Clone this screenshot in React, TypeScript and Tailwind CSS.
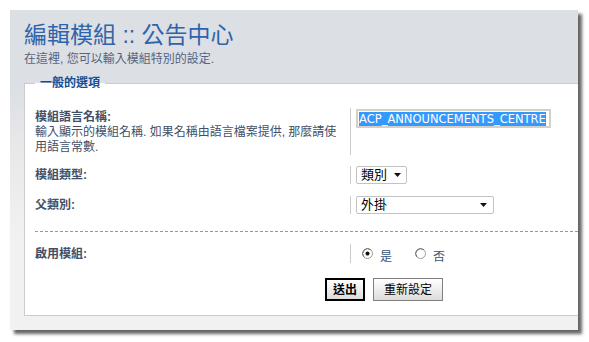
import React from "react";

function Radio({ checked }: { checked?: boolean }) {
  return (
    <svg width="11" height="11" viewBox="0 0 11 11" className="shrink-0">
      <circle cx="5.5" cy="5.5" r="5" fill="#fff" stroke="#9a9a9a" strokeWidth="1" />
      <path d="M1.8 8.8 A5 5 0 0 1 8.8 1.8" fill="none" stroke="#6f6f6f" strokeWidth="1" />
      {checked && <circle cx="5.5" cy="5.5" r="2" fill="#111" />}
    </svg>
  );
}

function Arrow() {
  return (
    <svg width="7" height="4" viewBox="0 0 7 4">
      <path d="M0 0 H7 L3.5 4 Z" fill="#111" />
    </svg>
  );
}

export default function App() {
  return (
    <div className="w-[589px] h-[342px] bg-white pt-[10px] pl-[10px] font-['Liberation_Sans','Noto_Sans_CJK_TC',sans-serif]">
      <div className="w-[568px] h-[320px] flex flex-col shadow-[4px_4px_3px_rgba(0,0,0,0.6)] bg-[linear-gradient(to_bottom,#dcdfe3_0%,#dcdfe3_24%,#e6e7e9_40%,#f1f1f1_70%,#f1f1f1_100%)]">
        <div className="pl-[14px] pt-[11px] h-[66px]">
          <h1 className="text-[23px] leading-[28px] text-[#2f64ab] font-normal">編輯模組 :: 公告中心</h1>
          <p className="text-[12px] leading-[16px] text-[#536482] mt-[2px]">在這裡, 您可以輸入模組特別的設定.</p>
        </div>
        <fieldset className="ml-[14px] mr-0 mb-[14px] flex-1 bg-white border border-r-0 border-[#cccccc] pl-[10px] pr-0 pb-0 m-0 min-w-0">
          <legend className="px-[5px] text-[12px] leading-[14px] font-bold text-[#115098]">一般的選項</legend>
          <div className="mt-[18px] flex flex-col">
            <div className="flex">
              <div className="w-[315px] pt-[2px] text-[12px] text-[#425067]">
                <div className="font-bold leading-[14px]">模組語言名稱:</div>
                <div className="leading-[15px] mt-[1px] pr-[8px]">輸入顯示的模組名稱. 如果名稱由語言檔案提供, 那麼請使用語言常數.</div>
              </div>
              <div className="border-l border-[#cccccc] pl-[5px] pt-[1px] h-[47px]">
                <div className="w-[195px] h-[19px] border-[2px] border-[#d4d0c8] flex items-center pl-[1px]">
                  <span className="bg-[#3399ff] text-white text-[11.5px] leading-[14px] font-['DejaVu_Sans',sans-serif] whitespace-nowrap">ACP_ANNOUNCEMENTS_CENTRE</span>
                </div>
              </div>
            </div>
            <div className="flex mt-[11px] items-center">
              <div className="w-[315px] text-[12px] font-bold text-[#425067]">模組類型:</div>
              <div className="border-l border-[#cccccc] pl-[5px] h-[18px] flex">
                <div className="w-[51px] h-[18px] border border-[#c3c3c3] rounded-[2px] bg-white flex items-center justify-between pl-[4px] pr-[5px]">
                  <span className="text-[13px] leading-[16px] text-black">類別</span>
                  <Arrow />
                </div>
              </div>
            </div>
            <div className="flex mt-[12px] items-center">
              <div className="w-[315px] text-[12px] font-bold text-[#425067]">父類別:</div>
              <div className="border-l border-[#cccccc] pl-[5px] h-[18px] flex">
                <div className="w-[138px] h-[18px] border border-[#c3c3c3] rounded-[2px] bg-white flex items-center justify-between pl-[4px] pr-[6px]">
                  <span className="text-[13px] leading-[16px] text-black">外掛</span>
                  <Arrow />
                </div>
              </div>
            </div>
            <div className="mt-[17px] border-t border-dashed border-[#999999]" />
            <div className="flex mt-[12px] items-center">
              <div className="w-[315px] text-[12px] font-bold text-[#425067]">啟用模組:</div>
              <div className="border-l border-[#cccccc] pl-[11px] h-[19px] flex items-center">
                <Radio checked />
                <span className="ml-[7px] mt-[6px] text-[12px] leading-[12px] text-[#3b5278]">是</span>
                <span className="ml-[23px] flex items-center"><Radio /></span>
                <span className="ml-[7px] mt-[6px] text-[12px] leading-[12px] text-[#3b5278]">否</span>
              </div>
            </div>
            <div className="flex gap-[8px] mt-[15px] pl-[290px]">
              <button className="w-[40px] h-[23px] border-2 border-black bg-[linear-gradient(to_bottom,#ffffff,#dcdcdc)] text-[12px] font-bold text-black leading-none">送出</button>
              <button className="w-[70px] h-[23px] border border-[#808080] bg-[linear-gradient(to_bottom,#ffffff,#dcdcdc)] text-[12px] text-black leading-none">重新設定</button>
            </div>
          </div>
        </fieldset>
      </div>
    </div>
  );
}
